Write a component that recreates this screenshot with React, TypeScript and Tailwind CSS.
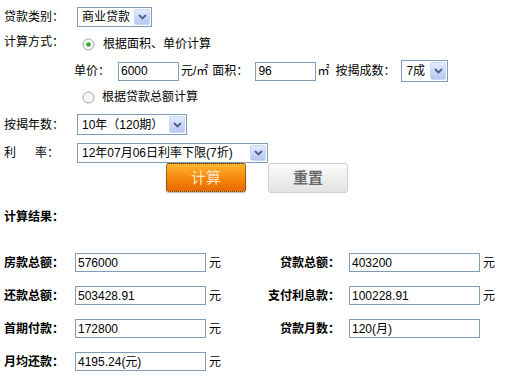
function Select({ className, text }: { className: string; text: string }) {
  return (
    <div className={`flex items-stretch border border-[#7f9db9] bg-white p-[1px] ${className}`}>
      <span className="flex-1 flex items-center pl-[3px] whitespace-nowrap overflow-hidden">{text}</span>
      <span className="w-[16px] flex items-center justify-center rounded-[2px] border border-[#c9d6f6] bg-linear-to-b from-[#e3ebfe] to-[#b5c7f3]">
        <svg width="9" height="6" viewBox="0 0 9 6">
          <path d="M1 1l3.5 3.5L8 1" stroke="#4d6185" strokeWidth="1.8" fill="none" />
        </svg>
      </span>
    </div>
  );
}

function Radio({ checked }: { checked?: boolean }) {
  return (
    <svg width="13" height="13" viewBox="0 0 13 13">
      <circle cx="6.5" cy="6.5" r="5.5" fill="#f6f6f2" stroke="#97a3ae" />
      {checked && <circle cx="6.5" cy="6.5" r="2.3" fill="#2ea83b" />}
    </svg>
  );
}

function Field({ className, value }: { className: string; value: string }) {
  return (
    <div className={`h-[19px] border border-[#7f9db9] bg-white pl-[2px] flex items-center ${className}`}>
      {value}
    </div>
  );
}

const results = [
  { l: "房款总额：", lv: "576000", ly: true, r: "贷款总额：", rv: "403200", ry: true },
  { l: "还款总额：", lv: "503428.91", ly: true, r: "支付利息款：", rv: "100228.91", ry: true },
  { l: "首期付款：", lv: "172800", ly: true, r: "贷款月数：", rv: "120(月)", ry: false },
  { l: "月均还款：", lv: "4195.24(元)", ly: true, r: "", rv: "", ry: false },
];

export default function App() {
  return (
    <div className="w-[513px] h-[386px] overflow-hidden bg-white text-black text-[12px] leading-[16px] font-['Liberation_Sans','Noto_Sans_CJK_SC',sans-serif]">
      <div className="pt-[7px]">
        <div className="flex items-center h-[20px]">
          <div className="w-[77px] pl-[4px]">贷款类别：</div>
          <Select className="w-[75px] h-[20px]" text="商业贷款" />
        </div>

        <div className="flex items-center h-[34px]">
          <div className="w-[82px] pl-[4px] self-start pt-[7px]">计算方式：</div>
          <Radio checked />
          <span className="ml-[8px]">根据面积、单价计算</span>
        </div>

        <div className="flex items-center h-[20px] pl-[74px]">
          <span>单价：</span>
          <Field className="ml-[8px] w-[61px]" value="6000" />
          <span className="ml-[2px]">元/㎡</span>
          <span className="ml-[4px]">面积：</span>
          <Field className="ml-[7px] w-[61px]" value="96" />
          <span className="ml-[1px]">㎡</span>
          <span className="ml-[6px]">按揭成数：</span>
          <Select className="ml-[6px] w-[47px] h-[22px]" text="7成" />
        </div>

        <div className="flex items-center h-[16px] mt-[8px] pl-[82px]">
          <Radio />
          <span className="ml-[7px]">根据贷款总额计算</span>
        </div>

        <div className="flex items-center h-[21px] mt-[9px]">
          <div className="w-[77px] pl-[4px]">按揭年数：</div>
          <Select className="w-[110px] h-[21px]" text="10年（120期）" />
        </div>

        <div className="flex items-center h-[20px] mt-[8px]">
          <div className="w-[77px] pl-[4px] flex">
            <span>利</span>
            <span className="ml-[19px]">率：</span>
          </div>
          <Select className="w-[191px] h-[20px]" text="12年07月06日利率下限(7折)" />
        </div>

        <div className="flex pl-[166px] gap-[22px]">
          <button className="w-[80px] h-[29px] rounded-[3px] border border-dotted border-[#4a2c12] bg-linear-to-b from-[#fcb62e] via-[#f68a0c] to-[#e86800] text-[15px] text-[#fde3c6] shadow-[0_1px_1px_#bbb]">
            计算
          </button>
          <button className="w-[80px] h-[30px] rounded-[3px] border border-[#cfcfcf] bg-linear-to-b from-[#fcfcfc] to-[#e2e2e2] text-[15px] font-bold text-[#6a6a6a]">
            重置
          </button>
        </div>

        <div className="mt-[16px] pl-[4px] font-bold">计算结果：</div>

        <div className="mt-[28px] flex flex-col gap-[14px]">
          {results.map((r) => (
            <div key={r.l} className="flex items-center h-[19px]">
              <div className="w-[75px] pl-[4px] font-bold">{r.l}</div>
              <Field className="w-[131px]" value={r.lv} />
              <div className="w-[134px] flex items-center">
                <span className="ml-[3px]">{r.ly ? "元" : ""}</span>
                <span className="ml-auto font-bold">{r.r}</span>
              </div>
              {r.r && <Field className="ml-[9px] w-[131px]" value={r.rv} />}
              {r.ry && <span className="ml-[3px]">元</span>}
            </div>
          ))}
        </div>
      </div>
    </div>
  );
}
